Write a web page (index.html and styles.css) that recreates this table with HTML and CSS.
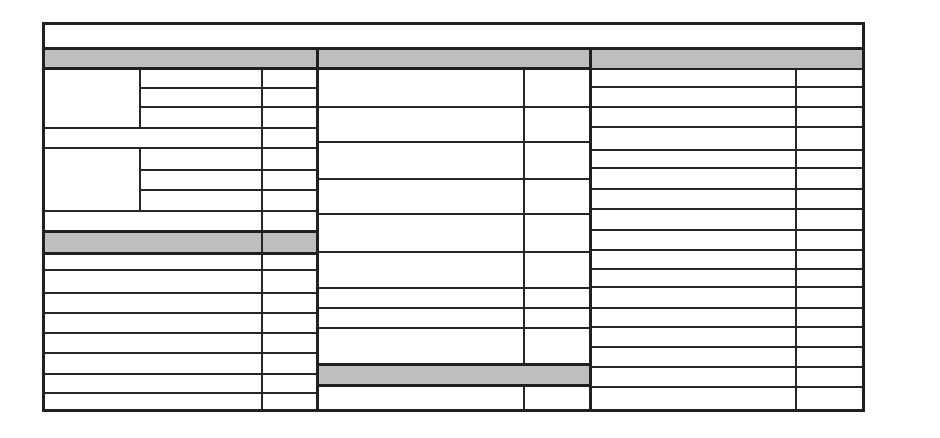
FILE: index.html
```html
<!DOCTYPE html>
<html>
<head>
<meta charset="utf-8">
<link rel="stylesheet" href="styles.css">
</head>
<body>
<div class="sheet">
  <div class="title"></div>
  <div class="cols">
    <div class="col c1">
      <div class="head"></div>
      <div class="group g1">
        <div class="span"></div>
        <div class="subs">
          <div class="row h19"><div class="k"></div><div></div></div>
          <div class="row h19"><div class="k"></div><div></div></div>
          <div class="row last h19"><div class="k"></div><div></div></div>
        </div>
      </div>
      <div class="row h20"><div class="k"></div><div></div></div>
      <div class="group g2">
        <div class="span"></div>
        <div class="subs">
          <div class="row h22"><div class="k"></div><div></div></div>
          <div class="row h20"><div class="k"></div><div></div></div>
          <div class="row last h19"><div class="k"></div><div></div></div>
        </div>
      </div>
      <div class="row last h18"><div class="k"></div><div></div></div>
      <div class="row band1"><div class="k"></div><div></div></div>
      <div class="row h16"><div class="k"></div><div></div></div>
      <div class="row h23"><div class="k"></div><div></div></div>
      <div class="row h20"><div class="k"></div><div></div></div>
      <div class="row h20"><div class="k"></div><div></div></div>
      <div class="row h20"><div class="k"></div><div></div></div>
      <div class="row h21"><div class="k"></div><div></div></div>
      <div class="row h19"><div class="k"></div><div></div></div>
      <div class="row last fill"><div class="k"></div><div></div></div>
    </div>
    <div class="col c2">
      <div class="head"></div>
      <div class="row h38"><div class="k"></div><div></div></div>
      <div class="row h35"><div class="k"></div><div></div></div>
      <div class="row h37"><div class="k"></div><div></div></div>
      <div class="row h35"><div class="k"></div><div></div></div>
      <div class="row h38"><div class="k"></div><div></div></div>
      <div class="row h36"><div class="k"></div><div></div></div>
      <div class="row h20"><div class="k"></div><div></div></div>
      <div class="row h20"><div class="k"></div><div></div></div>
      <div class="row last h34"><div class="k"></div><div></div></div>
      <div class="band2"></div>
      <div class="row last fill"><div class="k"></div><div></div></div>
    </div>
    <div class="col c3">
      <div class="head"></div>
      <div class="row h18"><div class="k"></div><div></div></div>
      <div class="row h20"><div class="k"></div><div></div></div>
      <div class="row h20"><div class="k"></div><div></div></div>
      <div class="row h23"><div class="k"></div><div></div></div>
      <div class="row h18"><div class="k"></div><div></div></div>
      <div class="row h21"><div class="k"></div><div></div></div>
      <div class="row h20"><div class="k"></div><div></div></div>
      <div class="row h21"><div class="k"></div><div></div></div>
      <div class="row h20"><div class="k"></div><div></div></div>
      <div class="row h19"><div class="k"></div><div></div></div>
      <div class="row h18"><div class="k"></div><div></div></div>
      <div class="row h21"><div class="k"></div><div></div></div>
      <div class="row h19"><div class="k"></div><div></div></div>
      <div class="row h20"><div class="k"></div><div></div></div>
      <div class="row h20"><div class="k"></div><div></div></div>
      <div class="row h20"><div class="k"></div><div></div></div>
      <div class="row last fill"><div class="k"></div><div></div></div>
    </div>
  </div>
</div>
</body>
</html>
```

FILE: styles.css
```css
html, body {
  margin: 0;
  padding: 0;
  background: #ffffff;
  font-family: "Liberation Sans", Arial, sans-serif;
}

.sheet {
  box-sizing: border-box;
  width: 823px;
  height: 390px;
  margin: 22px 0 0 42px;
  border: 3px solid #231f20;
  display: flex;
  flex-direction: column;
}

.title {
  flex: none;
  height: 22px;
  border-bottom: 3px solid #231f20;
}

.cols {
  flex: 1;
  display: flex;
  min-height: 0;
}

.col {
  box-sizing: border-box;
  display: flex;
  flex-direction: column;
}

.c1 {
  width: 274px;
  border-right: 3px solid #231f20;
}

.c2 {
  width: 273px;
  border-right: 3px solid #231f20;
}

.c3 {
  width: 270px;
}

.head {
  flex: none;
  height: 17px;
  background: #bcbec0;
  border-bottom: 3px solid #231f20;
}

.c3 .head {
  height: 18px;
  border-bottom-width: 2px;
}

.row {
  flex: none;
  box-sizing: border-box;
  display: grid;
  border-bottom: 2px solid #2a2627;
}

.row.last {
  border-bottom: 0;
}

.row.fill {
  flex: 1;
}

.row > .k {
  border-right: 2px solid #2a2627;
}

.c1 .row {
  grid-template-columns: 218px 53px;
}

.c1 .subs .row {
  grid-template-columns: 122px 53px;
}

.c2 .row {
  grid-template-columns: 206px 64px;
}

.c3 .row {
  grid-template-columns: 205px 65px;
}

.group {
  flex: none;
  box-sizing: border-box;
  display: flex;
  border-bottom: 2px solid #2a2627;
}

.g1 { height: 59px; }
.g2 { height: 63px; }

.span {
  box-sizing: border-box;
  width: 96px;
  border-right: 2px solid #2a2627;
}

.subs {
  flex: 1;
  display: flex;
  flex-direction: column;
}

.band1 {
  height: 25px;
  background: #bcbec0;
  border-top: 3px solid #231f20;
  border-bottom: 3px solid #231f20;
}

.band2 {
  flex: none;
  box-sizing: border-box;
  height: 24px;
  background: #bcbec0;
  border-top: 3px solid #231f20;
  border-bottom: 3px solid #231f20;
}

.h16 { height: 16px; }
.h18 { height: 18px; }
.h19 { height: 19px; }
.h20 { height: 20px; }
.h21 { height: 21px; }
.h22 { height: 22px; }
.h23 { height: 23px; }
.h34 { height: 34px; }
.h35 { height: 35px; }
.h36 { height: 36px; }
.h37 { height: 37px; }
.h38 { height: 38px; }
```
